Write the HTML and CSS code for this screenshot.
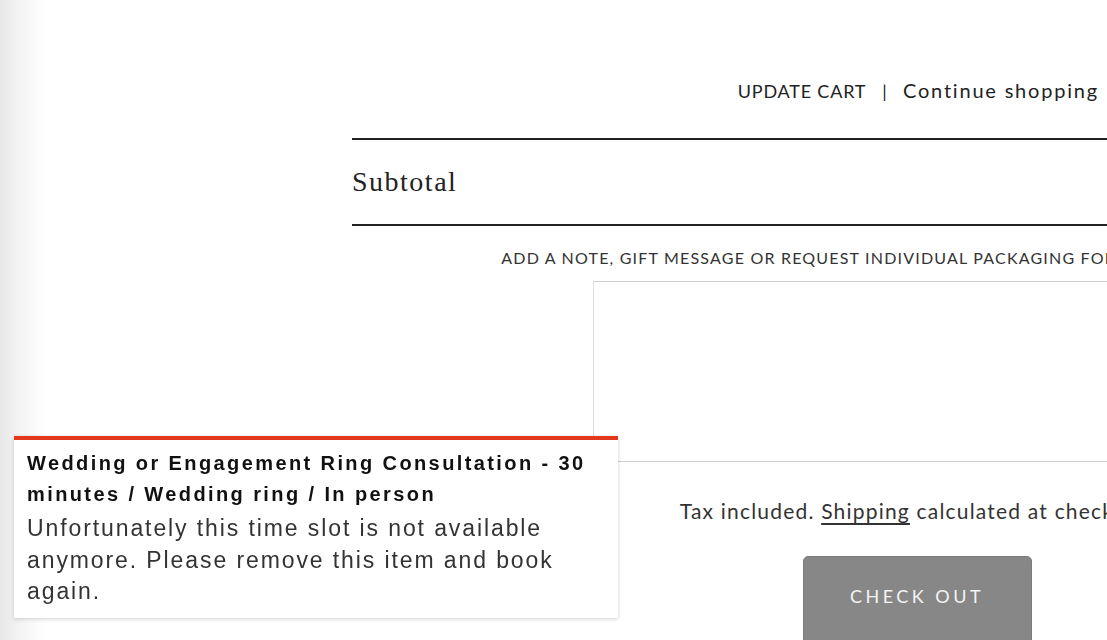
FILE: index.html
```html
<!DOCTYPE html>
<html lang="en">
<head>
    <meta charset="UTF-8">
    <meta name="viewport" content="width=device-width, initial-scale=1.0">
    <title>Cart</title>
    <link rel="stylesheet" href="styles.css">
</head>
<body>

    <main class="cart">
        <div class="cart-actions">
            <a href="#" class="update">UPDATE CART</a>
            <span class="sep">|</span>
            <a href="#" class="continue">Continue shopping</a>
        </div>

        <div class="subtotal">
            <span>Subtotal</span>
            <span>£0.00</span>
        </div>

        <label class="note-label" for="note">ADD A NOTE, GIFT MESSAGE OR REQUEST INDIVIDUAL PACKAGING FOR YOUR ORDER</label>

        <div class="note-box">
            <textarea id="note"></textarea>
            <p class="tax">Tax included. <a href="#">Shipping</a> calculated at checkout</p>
            <button class="checkout">CHECK OUT</button>
        </div>
    </main>

    <div class="toast">
        <h4>Wedding or Engagement Ring Consultation - 30 minutes / Wedding ring / In person</h4>
        <p>Unfortunately this time slot is not available anymore. Please remove this item and book again.</p>
    </div>

</body>
</html>
```

FILE: styles.css
```css
html, body {
    overflow: hidden;
}

body {
    margin: 0;
    height: 640px;
    font-family: Lato, 'Open Sans', sans-serif;
    color: #222;
    background: linear-gradient(to right, #e8e8e8 0, #f6f6f6 25px, #ffffff 45px);
}

.cart {
    margin-left: 352px;
    width: 883px;
}

.cart-actions {
    margin-top: 78px;
    margin-bottom: 34px;
    padding-right: 136px;
    text-align: right;
    line-height: 24px;
    white-space: nowrap;
}

.cart-actions a {
    color: #222;
    text-decoration: none;
}

.update {
    font-size: 18px;
    letter-spacing: 0.8px;
}

.sep {
    margin: 0 12px;
    font-size: 18px;
}

.continue {
    font-size: 20px;
    letter-spacing: 1.8px;
}

.subtotal {
    display: flex;
    justify-content: space-between;
    border-top: 2px solid #222;
    border-bottom: 2px solid #222;
    padding: 27px 0;
    line-height: 30px;
    font-family: 'Liberation Serif', serif;
    font-size: 28px;
    letter-spacing: 1.5px;
}

.note-label {
    display: block;
    margin-top: 22px;
    margin-bottom: 13px;
    text-align: right;
    line-height: 20px;
    font-size: 16px;
    letter-spacing: 1.2px;
    color: #333;
    white-space: nowrap;
}

.note-box {
    width: 642px;
    margin-left: auto;
    text-align: center;
}

.note-box textarea {
    display: block;
    box-sizing: border-box;
    width: 100%;
    height: 181px;
    margin: 0;
    border: 1px solid #cfcfcf;
    border-left-color: #dedede;
    resize: none;
}

.tax {
    margin: 37px 0 33px;
    line-height: 24px;
    font-size: 21px;
    letter-spacing: 1.2px;
    color: #333;
    white-space: nowrap;
}

.tax a {
    color: #333;
    text-decoration: underline;
    text-underline-offset: 4px;
}

.checkout {
    width: 229px;
    height: 96px;
    margin-left: 6px;
    background-color: #878787;
    border: 1px solid #7c7c7c;
    border-radius: 5px;
    color: #f4f4f4;
    font-family: Lato, sans-serif;
    font-size: 18px;
    letter-spacing: 3.5px;
    padding: 0 0 16px;
}

.toast {
    position: fixed;
    top: 436px;
    left: 14px;
    width: 604px;
    box-sizing: border-box;
    height: 182px;
    padding: 8px 13px 10px;
    background-color: #ffffff;
    border-top: 4px solid #e2391d;
    box-shadow: 0 1px 4px rgba(0, 0, 0, 0.18);
    font-family: 'Liberation Sans', Arial, sans-serif;
}

.toast h4 {
    margin: 0;
    font-size: 20px;
    line-height: 31px;
    letter-spacing: 2.4px;
    color: #111;
}

.toast p {
    margin: 3px 0 0;
    font-size: 23px;
    line-height: 31.5px;
    letter-spacing: 1.9px;
    color: #333;
}
```
